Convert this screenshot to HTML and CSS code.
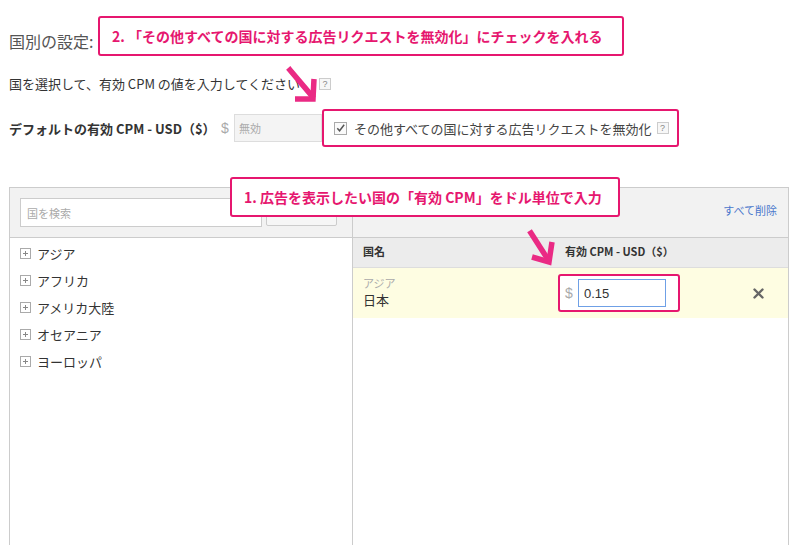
FILE: index.html
```html
<!DOCTYPE html>
<html lang="ja">
<head>
<meta charset="utf-8">
<title>国別の設定</title>
<link rel="stylesheet" href="styles.css">
</head>
<body>
<div class="page">
  <h1 class="title">国別の設定:</h1>
  <p class="desc">国を選択して、有効 CPM の値を入力してください <span class="help">?</span></p>

  <div class="default-row">
    <span class="default-label">デフォルトの有効 CPM - USD（$）</span>
    <span class="dollar">$</span>
    <input class="default-input" type="text" placeholder="無効" disabled>
    <label class="block-all mark">
      <span class="checkbox"><svg width="12" height="12" viewBox="0 0 12 12"><polyline points="2.5,6.2 5,9 10,2.5" fill="none" stroke="#555" stroke-width="1.6"/></svg></span>
      <span class="block-text">その他すべての国に対する広告リクエストを無効化</span>
      <span class="help">?</span>
    </label>
  </div>

  <div class="panel">
    <div class="col col-left">
      <div class="col-head">
        <input class="search" type="text" placeholder="国を検索">
        <span class="search-btn"></span>
      </div>
      <ul class="regions">
        <li><span class="plus"></span>アジア</li>
        <li><span class="plus"></span>アフリカ</li>
        <li><span class="plus"></span>アメリカ大陸</li>
        <li><span class="plus"></span>オセアニア</li>
        <li><span class="plus"></span>ヨーロッパ</li>
      </ul>
    </div>
    <div class="col col-right">
      <div class="col-head head-right">
        <a class="clear-all">すべて削除</a>
      </div>
      <div class="table">
        <div class="th th-name">国名</div>
        <div class="th th-cpm">有効 CPM - USD（$）</div>
        <div class="th"></div>
        <div class="td td-name"><span class="region-small">アジア</span><span class="country">日本</span></div>
        <div class="td td-cpm">
          <span class="cpm-box mark"><span class="dollar">$</span><input class="cpm-input" type="text" value="0.15"></span>
        </div>
        <div class="td td-del">
          <svg width="11" height="11" viewBox="0 0 11 11"><path d="M1.5 1.5 L9.5 9.5 M9.5 1.5 L1.5 9.5" stroke="#666" stroke-width="2.4" stroke-linecap="round"/></svg>
        </div>
      </div>
    </div>
  </div>
</div>

<div class="callout callout-2">2. 「その他すべての国に対する広告リクエストを無効化」にチェックを入れる</div>
<div class="callout callout-1">1. 広告を表示したい国の「有効 CPM」をドル単位で入力</div>

<svg class="arrow arrow-1" width="34" height="40" viewBox="0 0 34 40">
  <path d="M4 4 L26 30" stroke="#ea2a84" stroke-width="5.5" stroke-linecap="square"/>
  <path d="M28 13 L27 33 L9 33" fill="none" stroke="#ea2a84" stroke-width="5.5" stroke-linejoin="miter"/>
</svg>
<svg class="arrow arrow-2" width="34" height="40" viewBox="0 0 34 40">
  <path d="M5 4 L21 29" stroke="#ea2a84" stroke-width="5.5" stroke-linecap="square"/>
  <path d="M26 13 L23 33 L6 28" fill="none" stroke="#ea2a84" stroke-width="5.5" stroke-linejoin="miter"/>
</svg>
</body>
</html>
```

FILE: styles.css
```css
* { box-sizing: border-box; }

html, body {
  margin: 0;
  padding: 0;
  background: #fff;
  overflow: hidden;
  height: 545px;
}

body {
  font-family: "Noto Sans CJK JP", "Noto Sans", sans-serif;
  color: #333;
  font-size: 13px;
  position: relative;
}

.page {
  padding: 31px 0 0 9px;
}

.title {
  margin: 0;
  font-size: 16px;
  font-weight: normal;
  line-height: 20px;
  color: #555;
}

.desc {
  margin: 24px 0 0;
  line-height: 18px;
  font-size: 13px;
  display: flex;
  align-items: center;
}

.help {
  display: inline-flex;
  align-items: center;
  justify-content: center;
  width: 12px;
  height: 12px;
  border: 1px solid #ccc;
  background: #f7f7f7;
  color: #888;
  font-size: 9px;
  line-height: 1;
  font-family: "Liberation Sans", sans-serif;
  margin-left: 19px;
}

.default-row {
  margin-top: 16px;
  height: 38px;
  display: flex;
  align-items: center;
}

.default-label {
  width: 212px;
  font-weight: bold;
  font-size: 13px;
}

.dollar {
  width: 13px;
  color: #aaa;
  font-size: 14px;
  font-family: "Liberation Sans", sans-serif;
}

.default-input {
  width: 88px;
  height: 28px;
  margin: 0;
  border: 1px solid #ddd;
  background: #f4f4f4;
  font-family: inherit;
  font-size: 11px;
  padding: 0 4px;
}
.default-input::placeholder { color: #aaa; }

.mark {
  border: 2px solid #e6176f;
  border-radius: 3px;
  background: #fff;
}

.block-all {
  width: 357px;
  height: 38px;
  display: flex;
  align-items: center;
  padding-left: 10px;
}

.checkbox {
  width: 13px;
  height: 13px;
  border: 1px solid #aaa;
  background: #fafafa;
  display: inline-flex;
  align-items: center;
  justify-content: center;
  margin-right: 7px;
}
.checkbox svg { display: block; }

.block-text {
  font-size: 13px;
  color: #444;
  white-space: nowrap;
}

.block-all .help { margin-left: 5px; }

/* panel */
.panel {
  margin-top: 40px;
  width: 780px;
  height: 359px;
  border: 1px solid #ccc;
  display: grid;
  grid-template-columns: 343px 1fr;
}

.col-left { border-right: 1px solid #ccc; }

.col-head {
  height: 50px;
  background: #f2f2f2;
  border-bottom: 1px solid #ccc;
  display: flex;
  align-items: flex-start;
  padding: 10px 0 0 10px;
  gap: 4px;
}

.search {
  width: 242px;
  height: 29px;
  margin: 0;
  border: 1px solid #ccc;
  background: #fff;
  font-family: inherit;
  font-size: 11px;
  padding: 0 6px;
}
.search::placeholder { color: #aaa; }

.search-btn {
  width: 71px;
  height: 28px;
  border: 1px solid #ccc;
  border-radius: 2px;
  background: #f6f6f6;
}

.regions {
  list-style: none;
  margin: 0;
  padding: 2px 0 0 10px;
}
.regions li {
  height: 27px;
  display: flex;
  align-items: center;
  font-size: 13px;
  color: #333;
}

.plus {
  width: 11px;
  height: 11px;
  border: 1px solid #aaa;
  margin-right: 6px;
  position: relative;
  background: #fff;
}
.plus::before, .plus::after {
  content: "";
  position: absolute;
  background: #888;
}
.plus::before { left: 2px; right: 2px; top: 4px; height: 1px; }
.plus::after { top: 2px; bottom: 2px; left: 4px; width: 1px; }

.head-right {
  justify-content: flex-end;
  padding: 14px 11px 0 0;
}

.clear-all {
  color: #4a77cc;
  font-size: 11px;
  line-height: 16px;
  cursor: pointer;
}

.table {
  display: grid;
  grid-template-columns: 205px 1fr 68px;
}

.th {
  height: 30px;
  background: #ececec;
  border-bottom: 1px solid #ddd;
  font-weight: bold;
  font-size: 11px;
  display: flex;
  align-items: center;
  padding-bottom: 3px;
}
.th-name { padding-left: 10px; }
.th-cpm { padding-left: 7px; }

.td {
  height: 50px;
  background: #fefde2;
  display: flex;
}

.td-name {
  flex-direction: column;
  padding: 8px 0 0 10px;
}
.region-small {
  font-size: 11px;
  color: #aaa;
  line-height: 15px;
}
.country {
  font-size: 13px;
  line-height: 18px;
}

.td-cpm {
  align-items: center;
}

.cpm-box {
  width: 122px;
  height: 38px;
  display: flex;
  align-items: center;
  padding-left: 5px;
}

.cpm-input {
  width: 88px;
  height: 28px;
  margin: 0;
  border: 1px solid #6fa0e6;
  background: #fff;
  font-family: "Liberation Sans", sans-serif;
  font-size: 13px;
  color: #333;
  padding: 0 5px;
}

.td-del {
  align-items: center;
  padding-left: 33px;
}

/* annotations */
.callout {
  position: absolute;
  height: 40px;
  border: 2px solid #e6176f;
  border-radius: 3px;
  background: #fff;
  color: #e6176f;
  font-weight: bold;
  font-size: 14px;
  display: flex;
  align-items: center;
  padding-left: 12px;
  white-space: nowrap;
}
.callout-2 { left: 98px; top: 16px; width: 526px; }
.callout-1 { left: 230px; top: 177px; width: 390px; }

.arrow { position: absolute; }
.arrow-1 { left: 286px; top: 66px; }
.arrow-2 { left: 526px; top: 229px; }
```
